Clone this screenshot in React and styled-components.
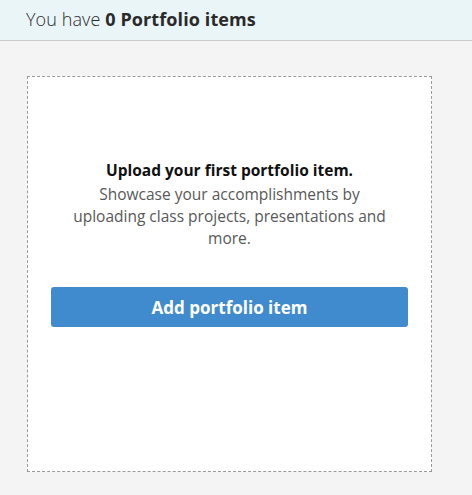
import React from "react";
import styled, { createGlobalStyle } from "styled-components";

const Global = createGlobalStyle`
  html, body { margin: 0; padding: 0; background: #f4f4f4; }
  body { font-family: "Open Sans", "Noto Sans", sans-serif; }
`;

const Header = styled.header`
  height: 41px;
  box-sizing: border-box;
  background: #eaf5f8;
  border-bottom: 1px solid #c8cccd;
  padding: 0 26px 2px;
  display: flex;
  align-items: center;
`;

const HeaderText = styled.h1`
  margin: 0;
  font-size: 18px;
  font-weight: 300;
  color: #2a2a2a;
  letter-spacing: 0.1px;
  b { font-weight: 700; color: #2a2a2a; }
`;

const Main = styled.main`
  padding: 35px 0 0 27px;
`;

const Card = styled.section`
  box-sizing: border-box;
  width: 405px;
  height: 396px;
  background: #fff;
  border: 1px dashed #9a9a9a;
  padding: 82px 23px 0;
  display: flex;
  flex-direction: column;
  align-items: center;
`;

const Title = styled.h2`
  margin: 0 0 2px;
  font-size: 15.5px;
  font-weight: 700;
  color: #111;
  line-height: 22px;
  text-align: center;
`;

const Body = styled.p`
  margin: 0;
  max-width: 330px;
  font-size: 15.5px;
  line-height: 22px;
  color: #585858;
  text-align: center;
  font-weight: 400;
`;

const Button = styled.button`
  margin-top: 38px;
  width: 100%;
  height: 40px;
  border: none;
  border-radius: 3px;
  background: #3f8bcd;
  color: #fff;
  font-family: "Open Sans", "Noto Sans", sans-serif;
  font-size: 17px;
  font-weight: 700;
  cursor: pointer;
`;

export default function App() {
  return (
    <>
      <Global />
      <Header>
        <HeaderText>
          You have <b>0 Portfolio items</b>
        </HeaderText>
      </Header>
      <Main>
        <Card>
          <Title>Upload your first portfolio item.</Title>
          <Body>
            Showcase your accomplishments by uploading class projects,
            presentations and more.
          </Body>
          <Button>Add portfolio item</Button>
        </Card>
      </Main>
    </>
  );
}
